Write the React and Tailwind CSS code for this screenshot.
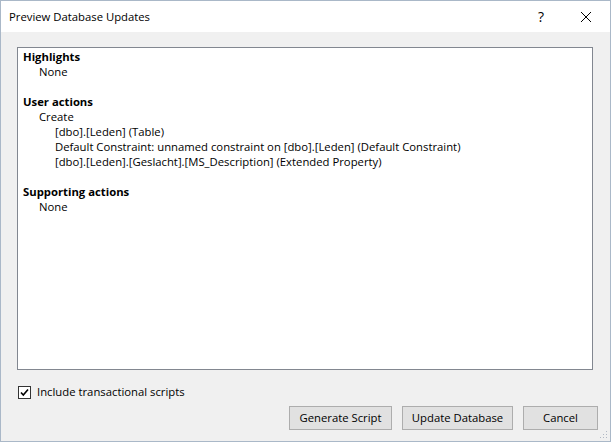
import React from 'react';

const Line = ({ level = 0, bold, children }) => {
    const pad = level === 0 ? 'pl-0' : level === 1 ? 'pl-[16px]' : 'pl-[32px]';
    return <div className={`${pad} h-[15px] whitespace-nowrap ${bold ? 'font-bold' : ''}`}>{children}</div>;
};

const Button = ({ width, children }) => (
    <button className={`${width} h-[24px] bg-[#e1e1e1] border border-[#adadad] text-[11.3px] leading-[16px] text-black flex items-center justify-center`}>
        {children}
    </button>
);

export default function App() {
    return (
        <div className="w-[611px] h-[442px] border border-[#aab8c8] bg-[#f0f0f0] flex flex-col text-[11.3px] leading-[16px] text-black font-['Open_Sans',sans-serif] relative">
            {/* title bar */}
            <div className="h-[31px] bg-white flex items-center pl-[8px] shrink-0">
                <span className="text-[11.3px]">Preview Database Updates</span>
                <span className="ml-auto text-[14px] mr-[36px]">?</span>
                <svg width="12" height="12" viewBox="0 0 12 12" className="mr-[18px]">
                    <path d="M1 1 L11 11 M11 1 L1 11" stroke="#000" strokeWidth="1" fill="none" />
                </svg>
            </div>

            <div className="flex-1 flex flex-col pl-[16px] pr-[17px] pt-[15px]">
                <div className="h-[323px] bg-white border border-[#828790] px-[5px] pt-[1px] leading-[15px]">
                    <Line bold>Highlights</Line>
                    <Line level={1}>None</Line>
                    <Line>&nbsp;</Line>
                    <Line bold>User actions</Line>
                    <Line level={1}>Create</Line>
                    <Line level={2}>[dbo].[Leden] (Table)</Line>
                    <Line level={2}>Default Constraint: unnamed constraint on [dbo].[Leden] (Default Constraint)</Line>
                    <Line level={2}>[dbo].[Leden].[Geslacht].[MS_Description] (Extended Property)</Line>
                    <Line>&nbsp;</Line>
                    <Line bold>Supporting actions</Line>
                    <Line level={1}>None</Line>
                </div>

                <label className="mt-[14px] h-[16px] flex items-center gap-[6px] pl-[1px]">
                    <span className="w-[13px] h-[13px] border border-[#333] bg-white flex items-center justify-center">
                        <svg width="11" height="11" viewBox="0 0 11 11">
                            <path d="M2 5.5 L4.3 8 L9 2.5" stroke="#000" strokeWidth="1.6" fill="none" />
                        </svg>
                    </span>
                    <span>Include transactional scripts</span>
                </label>

                <div className="flex justify-end gap-[10px] mt-[6px] -mr-[5px]">
                    <Button width="w-[103px]">Generate Script</Button>
                    <Button width="w-[111px]">Update Database</Button>
                    <Button width="w-[75px]">Cancel</Button>
                </div>
            </div>

            {/* resize grip */}
            <svg width="10" height="10" viewBox="0 0 10 10" className="absolute right-[2px] bottom-[2px]">
                {[[8, 2], [8, 5], [8, 8], [5, 5], [5, 8], [2, 8]].map(([x, y], i) => (
                    <rect key={i} x={x} y={y} width="1" height="1" fill="#b0b8c4" />
                ))}
            </svg>
        </div>
    );
}
